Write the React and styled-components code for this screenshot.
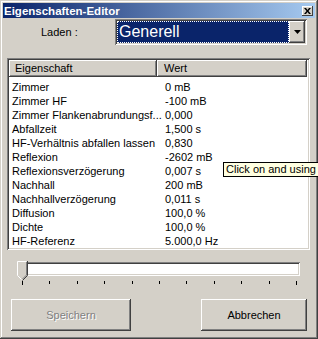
import React from 'react';
import styled, { createGlobalStyle, css } from 'styled-components';

const GlobalStyle = createGlobalStyle`
  html, body {
    margin: 0;
    padding: 0;
    overflow: hidden;
    background: #d4d0c8;
  }
  body {
    font-family: "Liberation Sans", Arial, sans-serif;
    font-size: 11px;
    color: #000;
  }
`;

const raised = css`
  box-shadow: inset -1px -1px #404040, inset 1px 1px #ffffff,
    inset -2px -2px #808080, inset 2px 2px #d4d0c8;
`;

const sunken = css`
  box-shadow: inset 1px 1px #808080, inset -1px -1px #ffffff,
    inset 2px 2px #404040, inset -2px -2px #d4d0c8;
`;

const Window = styled.div`
  position: relative;
  width: 318px;
  height: 339px;
  box-sizing: border-box;
  padding: 3px;
  overflow: hidden;
  background: #d4d0c8;
  box-shadow: inset -1px -1px #404040, inset 1px 1px #d4d0c8,
    inset -2px -2px #808080, inset 2px 2px #ffffff;
  display: flex;
  flex-direction: column;
`;

const TitleBar = styled.div`
  height: 15px;
  display: flex;
  align-items: center;
  justify-content: space-between;
  padding: 0 2px 0 1px;
  background: linear-gradient(to right, #0a246a, #a6caf0);
  color: #fff;
  font-weight: bold;
  font-size: 11.5px;
`;

const CloseButton = styled.div`
  width: 11px;
  height: 10px;
  background: #d4d0c8;
  box-shadow: inset -1px -1px #404040, inset 1px 1px #ffffff;
  display: flex;
  align-items: center;
  justify-content: center;
`;

const LoadRow = styled.div`
  display: flex;
  align-items: center;
  height: 26px;
  margin-top: 1px;
`;

const Label = styled.div`
  width: 112px;
  padding-left: 38px;
  box-sizing: border-box;
`;

const Combo = styled.div`
  width: 192px;
  height: 26px;
  box-sizing: border-box;
  padding: 2px;
  background: #fff;
  ${sunken};
  display: flex;
`;

const ComboValue = styled.div`
  flex: 1;
  background: #0a246a;
  color: #fff;
  font-size: 16px;
  line-height: 20px;
  padding-left: 1px;
  border: 1px dotted #ffffff;
`;

const DropButton = styled.div`
  width: 16px;
  background: #d4d0c8;
  ${raised};
  display: flex;
  align-items: center;
  justify-content: center;
`;

const List = styled.div`
  margin: 13px 0 0 4px;
  width: 303px;
  height: 192px;
  box-sizing: border-box;
  padding: 2px;
  background: #fff;
  ${sunken};
  display: flex;
  flex-direction: column;
`;

const HeaderRow = styled.div`
  display: flex;
  height: 17px;
  margin-bottom: 3px;
`;

const HeaderCell = styled.div`
  width: ${p => p.w}px;
  box-sizing: border-box;
  padding-left: ${p => p.pad}px;
  background: #d4d0c8;
  ${raised};
  line-height: 17px;
`;

const Row = styled.div`
  display: flex;
  height: 14px;
  line-height: 14px;
`;

const Cell = styled.div`
  width: ${p => p.w}px;
  box-sizing: border-box;
  padding-left: ${p => p.pad}px;
  white-space: nowrap;
`;

const SliderBlock = styled.div`
  margin: 12px 0 0 17px;
  width: 280px;
  position: relative;
`;

const Track = styled.div`
  height: 14px;
  box-sizing: border-box;
  background: #fff;
  ${sunken};
`;

const Thumb = styled.svg`
  position: absolute;
  left: -3px;
  top: -1px;
`;

const Ticks = styled.div`
  display: flex;
  justify-content: space-between;
  padding: 0 3px 0 2px;
  margin-top: 5px;
  height: 3px;
`;

const Tick = styled.div`
  width: 1px;
  height: ${p => (p.end ? 4 : 3)}px;
  background: #000;
`;

const ButtonRow = styled.div`
  display: flex;
  justify-content: space-between;
  margin: 15px 0 0 8px;
  width: 296px;
`;

const Button = styled.div`
  width: ${p => p.w}px;
  height: 32px;
  box-sizing: border-box;
  background: #d4d0c8;
  ${raised};
  display: flex;
  align-items: center;
  justify-content: center;
  ${p =>
    p.disabled &&
    css`
      color: #808080;
      text-shadow: 1px 1px #ffffff;
    `}
`;

const Tooltip = styled.div`
  position: absolute;
  left: 223px;
  top: 162px;
  width: 100px;
  height: 15px;
  box-sizing: border-box;
  overflow: hidden;
  padding: 0 3px 0 2px;
  line-height: 13px;
  font-size: 11px;
  background: #ffffe1;
  border: 1px solid #000;
  white-space: nowrap;
`;

const properties = [
  ['Zimmer', '0 mB'],
  ['Zimmer HF', '-100 mB'],
  ['Zimmer Flankenabrundungsf...', '0,000'],
  ['Abfallzeit', '1,500 s'],
  ['HF-Verhältnis abfallen lassen', '0,830'],
  ['Reflexion', '-2602 mB'],
  ['Reflexionsverzögerung', '0,007 s'],
  ['Nachhall', '200 mB'],
  ['Nachhallverzögerung', '0,011 s'],
  ['Diffusion', '100,0 %'],
  ['Dichte', '100,0 %'],
  ['HF-Referenz', '5.000,0 Hz'],
];

const App = () => {
  return (
    <>
      <GlobalStyle/>
      <Window>
        <TitleBar>
          <span>Eigenschaften-Editor</span>
          <CloseButton>
            <svg width="7" height="6" viewBox="0 0 7 6">
              <path d="M0 0h2l1.5 2 1.5-2h2L4.5 3 7 6H5L3.5 4 2 6H0l2.5-3z" fill="#000"/>
            </svg>
          </CloseButton>
        </TitleBar>
        <LoadRow>
          <Label>Laden :</Label>
          <Combo>
            <ComboValue>Generell</ComboValue>
            <DropButton>
              <svg width="7" height="4" viewBox="0 0 7 4">
                <path d="M0 0h7L3.5 4z" fill="#000"/>
              </svg>
            </DropButton>
          </Combo>
        </LoadRow>
        <List>
          <HeaderRow>
            <HeaderCell w={148} pad={6}>Eigenschaft</HeaderCell>
            <HeaderCell w={150} pad={7}>Wert</HeaderCell>
          </HeaderRow>
          {properties.map(([name, value]) => (
            <Row key={name}>
              <Cell w={148} pad={3}>{name}</Cell>
              <Cell w={150} pad={8}>{value}</Cell>
            </Row>
          ))}
        </List>
        <SliderBlock>
          <Track/>
          <Thumb width="11" height="20" viewBox="0 0 11 20">
            <path d="M0.5 0.5h10v14l-5 5-5-5z" fill="#d4d0c8"/>
            <path d="M0.5 14.5v-14h9" stroke="#fff" fill="none"/>
            <path d="M10.5 0v14.5l-5 5" stroke="#404040" fill="none"/>
            <path d="M9.5 1v13l-4 4" stroke="#808080" fill="none"/>
            <path d="M0.5 14.5l4 4" stroke="#fff" fill="none"/>
          </Thumb>
          <Ticks>
            {Array.from({ length: 11 }, (_, i) => (
              <Tick key={i} end={i === 0 || i === 10}/>
            ))}
          </Ticks>
        </SliderBlock>
        <ButtonRow>
          <Button w={120} disabled>Speichern</Button>
          <Button w={106}>Abbrechen</Button>
        </ButtonRow>
        <Tooltip>Click on and using Sliders</Tooltip>
      </Window>
    </>
  );
};

export default App;
